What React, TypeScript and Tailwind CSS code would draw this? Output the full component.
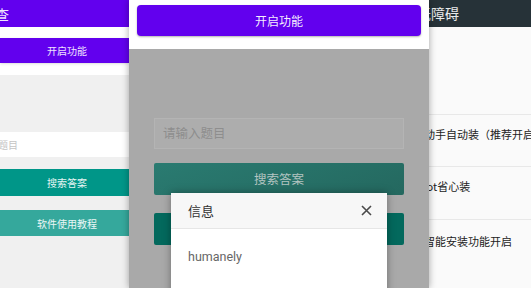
import React from 'react';

const cjk = { fontFamily: '"Noto Sans CJK SC", "Noto Sans", sans-serif' };

const LeftPhone: React.FC = () => (
  <div className="w-[129px] h-full shrink-0 overflow-hidden bg-[#f0f0f0] flex flex-col" style={cjk}>
    <div className="h-[27px] bg-[#6200ee] flex items-center">
      <span className="-ml-[5px] text-[14px] text-white/90 leading-none">查</span>
    </div>
    <div className="bg-white pt-[11px] pb-[12px]">
      <div className="h-[25px] bg-[#6200ee] flex items-center justify-center pl-[5px] shadow-sm">
        <span className="text-[10px] text-white/90">开启功能</span>
      </div>
    </div>
    <div className="h-[57px]" />
    <div className="h-[25px] bg-white flex items-center">
      <span className="-ml-[32px] text-[10px] text-[#c4c4c4] whitespace-nowrap">请输入题目</span>
    </div>
    <div className="pt-[12px] flex flex-col gap-[14px]">
      <div className="h-[27px] bg-[#009688] flex items-center justify-center pl-[5px]">
        <span className="text-[10px] text-white/90">搜索答案</span>
      </div>
      <div className="h-[26px] bg-[#35a89c] flex items-center justify-center pl-[5px]">
        <span className="text-[10px] text-white/90">软件使用教程</span>
      </div>
    </div>
  </div>
);

const MiddlePhone: React.FC = () => (
  <div className="relative z-10 w-[300px] h-full shrink-0 overflow-hidden flex flex-col shadow-[0_0_7px_rgba(0,0,0,0.35)]" style={cjk}>
    <div className="h-[49px] bg-white px-[8px] pt-[5px]">
      <div className="h-[31px] rounded-[4px] bg-[#6200ee] flex items-center justify-center shadow-[0_1px_2px_rgba(0,0,0,0.3)]">
        <span className="text-[12px] text-white/95">开启功能</span>
      </div>
    </div>
    <div className="relative flex-1 bg-[#a9a9a9] px-[25px] pt-[69px] flex flex-col">
      <div className="h-[31px] bg-[#adadad] border border-[#b4b4b4] flex items-center px-[8px]">
        <span className="text-[12.5px] text-[#8e8e8e]">请输入题目</span>
      </div>
      <div className="mt-[14px] h-[32px] rounded-[2px] bg-[linear-gradient(160deg,#2a7b71,#24685f)] flex items-center justify-center">
        <span className="text-[12.5px] text-[#b3c4c1]">搜索答案</span>
      </div>
      <div className="mt-[18px] h-[32px] rounded-[2px] bg-[#03695d]" />

      <div className="absolute left-[42px] top-[144px] w-[216px] h-[120px] bg-white shadow-[0_0_8px_rgba(0,0,0,0.35)]">
        <div className="h-[36px] bg-[#f7f7f7] border-b border-[#e6e6e6] flex items-center justify-between pl-[17px] pr-[15px]">
          <span className="text-[13px] text-[#333]">信息</span>
          <svg width="11" height="11" viewBox="0 0 11 11">
            <path d="M1 1 L10 10 M10 1 L1 10" stroke="#4a4a4a" strokeWidth="1.6" />
          </svg>
        </div>
        <div className="pl-[17px] pt-[13px]">
          <span className="text-[12.5px] text-[#666]" style={{ fontFamily: 'Roboto, "Noto Sans", sans-serif' }}>humanely</span>
        </div>
      </div>
    </div>
  </div>
);

const RightPhone: React.FC = () => (
  <div className="flex-1 h-full overflow-hidden bg-[#fafafa] flex flex-col" style={cjk}>
    <div className="h-[27px] bg-[#263238] flex items-center shrink-0">
      <span className="-ml-[12px] text-[14px] text-white/90 whitespace-nowrap">无障碍</span>
    </div>
    <div className="h-[88px] border-b border-[#e8e8e8]" />
    <div className="h-[52px] border-b border-[#e8e8e8] pt-[11px]">
      <span className="block -ml-[5px] text-[11px] text-[#222] whitespace-nowrap">动手自动装（推荐开启）</span>
    </div>
    <div className="h-[53px] border-b border-[#e8e8e8] pt-[11px]">
      <span className="block -ml-[16px] text-[11px] text-[#222] whitespace-nowrap">Root省心装</span>
    </div>
    <div className="pt-[13px]">
      <span className="block -ml-[5px] text-[11px] text-[#222] whitespace-nowrap">智能安装功能开启</span>
    </div>
  </div>
);

export default function App() {
  return (
    <div className="w-[531px] h-[288px] flex overflow-hidden bg-white">
      <LeftPhone />
      <MiddlePhone />
      <RightPhone />
    </div>
  );
}
